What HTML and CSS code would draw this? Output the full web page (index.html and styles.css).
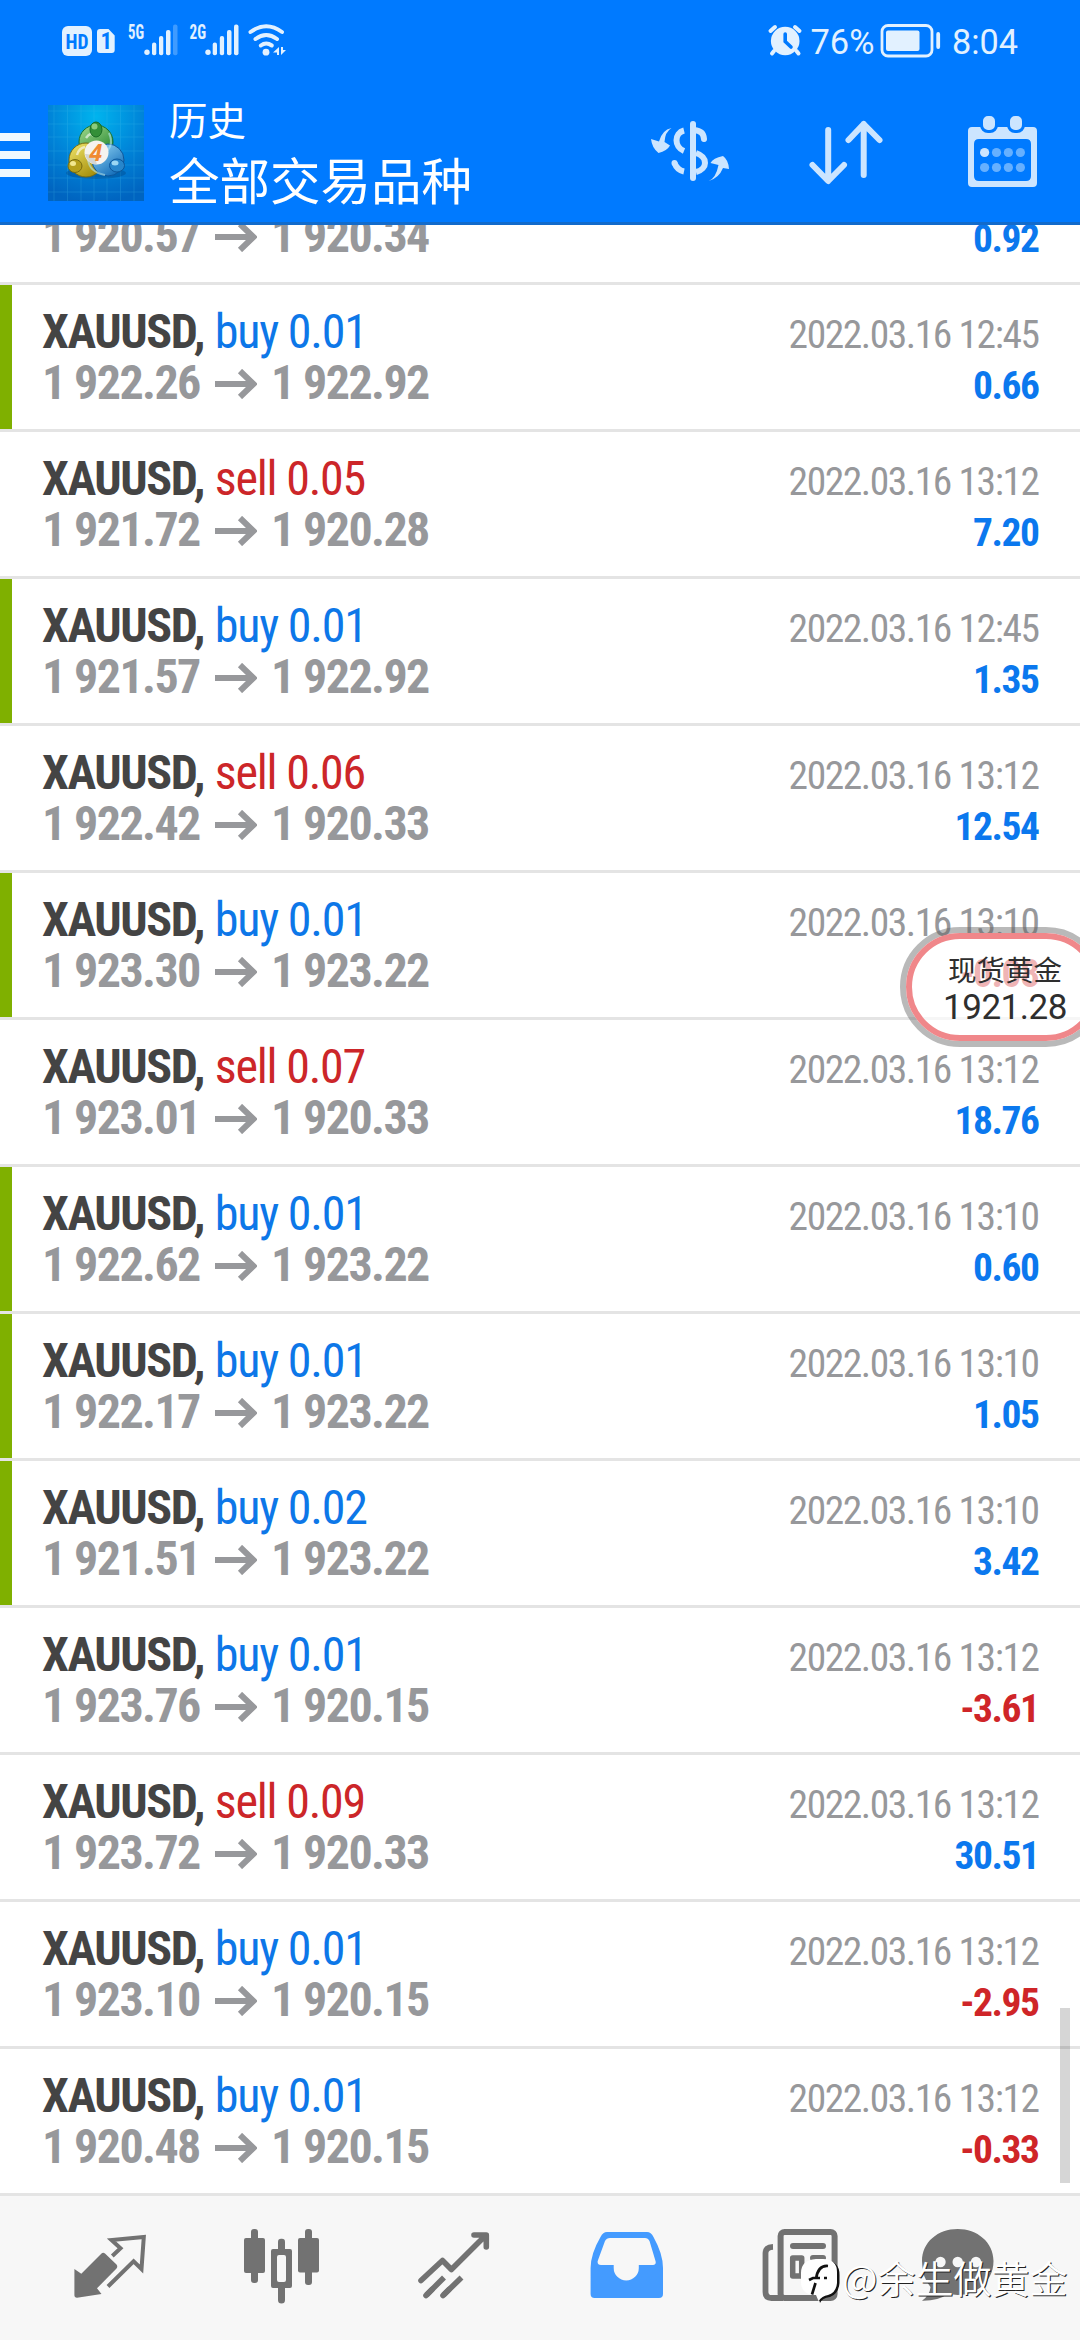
FILE: index.html
```html
<!DOCTYPE html>
<html lang="zh-CN">
<head>
<meta charset="utf-8">
<title>历史</title>
<link rel="stylesheet" href="styles.css">
</head>
<body>
<svg class="defs" width="0" height="0">
  <symbol id="arrow" viewBox="0 0 42 30"><path d="M0 15H38M25 2L38.500 15L25 28" fill="none" stroke="#97989b" stroke-width="6"/></symbol>
</svg>
<div class="screen">
  <header class="header">
    <div class="status">
      <svg class="status-net" width="240" height="80" viewBox="60 0 240 80" fill="#e2f1ff">
        <rect x="62" y="26" width="30" height="30" rx="6"/>
        <text x="65.500" y="48.500" class="hd" textLength="23" lengthAdjust="spacingAndGlyphs">HD</text>
        <path d="M100 29H108.500L114.700 35.500V50A3 3 0 0 1 111.700 53H100A3 3 0 0 1 97 50V32A3 3 0 0 1 100 29Z"/>
        <text x="100.500" y="49" class="sim">1</text>
        <text x="128" y="38.500" class="gen" textLength="16" lengthAdjust="spacingAndGlyphs">5G</text>
        <circle cx="147" cy="52.300" r="2.700"/>
        <rect x="152" y="42.500" width="4.300" height="12.800" rx="2"/>
        <rect x="159" y="36" width="4.300" height="19.300" rx="2"/>
        <rect x="166" y="30" width="4.500" height="25.300" rx="2"/>
        <rect x="173" y="24.500" width="4.500" height="30.800" rx="2" opacity=".28"/>
        <text x="189.500" y="38.500" class="gen" textLength="16.500" lengthAdjust="spacingAndGlyphs">2G</text>
        <circle cx="208" cy="52.300" r="2.700"/>
        <rect x="212.700" y="42.500" width="4.300" height="12.800" rx="2"/>
        <rect x="219.800" y="36" width="4.300" height="19.300" rx="2"/>
        <rect x="227" y="30" width="4.500" height="25.300" rx="2"/>
        <rect x="234" y="24.500" width="4.500" height="30.800" rx="2"/>
        <g fill="none" stroke="#e2f1ff" stroke-width="4" stroke-linecap="round"><path d="M250.500 32Q266.200 20.500 282 32"/><path d="M255.500 39Q266.200 31 277 39"/><path d="M260.800 45.500Q266.200 41.500 271.800 45.500"/></g>
        <circle cx="266" cy="52.200" r="3.400"/>
        <path d="M273 52.500L279 47V55H277V52.500ZM281 47H283V50H286L281 55Z"/>
      </svg>
      <svg class="status-sys" width="110" height="80" viewBox="765 0 110 80" fill="#e2f1ff">
        <path d="M770.500 31L775 27M799.500 31L795 27M774 51L772 53.500M796.500 51L798.500 53.500" stroke="#e2f1ff" stroke-width="4" stroke-linecap="round"/>
        <circle cx="785.200" cy="41" r="14.300"/>
        <path d="M785.200 34V41.500L791 47" fill="none" stroke="#007aff" stroke-width="3.600" stroke-linecap="round"/>
        <text x="810.500" y="54" class="num" textLength="64" lengthAdjust="spacingAndGlyphs">76%</text>
      </svg>
      <svg width="150" height="80" viewBox="875 0 150 80" fill="#e2f1ff">
        <rect x="882" y="25.500" width="50" height="30.500" rx="6" fill="none" stroke="#e2f1ff" stroke-width="2.800"/>
        <rect x="886" y="30.500" width="33.500" height="20.500" rx="2"/>
        <rect x="936.300" y="32" width="3.800" height="17" rx="1.900"/>
        <text x="952" y="54" class="num" textLength="66" lengthAdjust="spacingAndGlyphs">8:04</text>
      </svg>
    </div>
    <div class="bar">
      <svg class="menu" width="30" height="44" viewBox="0 0 30 44" fill="#f0f8ff"><path d="M0 0H30V8H0ZM0 18H30V26H0ZM0 36H30V44H0Z"/></svg>
      <svg class="logo" width="96" height="96" viewBox="0 0 96 96">
        <defs>
          <radialGradient id="sky" cx=".5" cy=".12" r=".9"><stop offset="0" stop-color="#00b4ee"/><stop offset=".55" stop-color="#0083d8"/><stop offset="1" stop-color="#0064c0"/></radialGradient>
          <linearGradient id="green" x2=".7" y2="1"><stop offset="0" stop-color="#a6dc92"/><stop offset="1" stop-color="#21852b"/></linearGradient>
          <linearGradient id="gold" x2=".7" y2="1"><stop offset="0" stop-color="#f2e76d"/><stop offset="1" stop-color="#a38c09"/></linearGradient>
          <linearGradient id="blue" x2=".7" y2="1"><stop offset="0" stop-color="#9bddf9"/><stop offset="1" stop-color="#116bb8"/></linearGradient>
        </defs>
        <rect width="96" height="96" fill="url(#sky)"/>
        <path d="M6 0V96M19.500 0V96M33 0V96M46 0V96M59 0V96M72.500 0V96M86 0V96M0 6H96M0 19H96M0 32H96M0 46H96M0 60H96M0 73H96M0 87H96" stroke="#4cc3ee" stroke-width=".7" opacity=".3"/>
        <ellipse cx="48" cy="68" rx="30" ry="6" fill="#003f7c" opacity=".35"/>
        <circle cx="48" cy="37" r="17" fill="url(#green)" stroke="#17702c"/>
        <circle cx="38" cy="55" r="17" fill="url(#gold)" stroke="#756b14"/>
        <circle cx="60" cy="55" r="16" fill="url(#blue)" stroke="#0d579b"/>
        <path d="M38 33Q43 26 46 31M29 50Q31 43 37 42" fill="none" stroke="#fff" stroke-width="2.500" opacity=".6"/>
        <path d="M61 28Q67 42 55 49M40 54Q41 67 57 70" fill="none" stroke="#b4e6ef" stroke-width="2" opacity=".6"/>
        <ellipse cx="48" cy="24.500" rx="6" ry="7.500" fill="#338f38" stroke="#176b25"/>
        <ellipse cx="46.500" cy="21.500" rx="3" ry="3" fill="#8ccb7c"/>
        <ellipse cx="27" cy="61" rx="7" ry="6.500" fill="#b5a01c" stroke="#796c10"/>
        <ellipse cx="25" cy="58.500" rx="3" ry="2.500" fill="#f2e890"/>
        <ellipse cx="69" cy="60.500" rx="7.500" ry="6.500" fill="#2786cb" stroke="#0d579b"/>
        <ellipse cx="67" cy="58" rx="3.500" ry="2.500" fill="#9bd7f3"/>
        <circle cx="48.500" cy="47.500" r="12" fill="#f5f3ef"/>
        <path d="M37 49Q47 48 49 59.500A12 12 0 0 1 37 49" fill="#c7c8c8" opacity=".7"/>
        <text x="41.500" y="55.500" class="four">4</text>
      </svg>
      <div class="titles">
        <div class="title">历史</div>
        <div class="subtitle">全部交易品种</div>
      </div>
      <div class="actions">
        <svg width="82" height="70" viewBox="648 118 82 70" fill="#cce5ff">
          <path d="M671.500 128Q665 132 664.500 142L670 145.500Q667 151 658.500 153Q652 148 651 139L659 141.500Q662 130 671.500 128Z"/>
          <path d="M708.700 181Q716 178 718.500 165L710.500 163Q713 158 723 156Q728.500 160 729 169L723 168Q719 178 708.700 181Z"/>
          <rect x="690" y="121" width="6" height="60" rx="3"/>
          <g fill="none" stroke="#cce5ff" stroke-width="6"><path d="M684 130.500C674 133 674 147 684 151"/><path d="M694 130C701 131 703.500 133 704 139" stroke-linecap="round"/><path d="M696 153C708 157 708 169 696 172"/><path d="M674.500 163Q677 170 684 171.500"/><path d="M674.500 163V163.100" stroke-linecap="round"/></g>
        </svg>
        <svg width="78" height="70" viewBox="806 118 78 70" fill="none" stroke="#cce5ff" stroke-width="6" stroke-linecap="round" stroke-linejoin="round"><path d="M828.200 130V180M812.500 165L828.200 181L844 165M863.700 175V124M848.500 140L863.700 124L879.500 140"/></svg>
        <svg width="72" height="76" viewBox="966 114 72 76">
          <path fill="#cce5ff" fill-rule="evenodd" d="M972 127H1033Q1037 127 1037 131V183Q1037 187 1033 187H972Q968 187 968 183V131Q968 127 972 127ZM979 139Q974 139 974 144V176Q974 181 979 181H1026Q1031 181 1031 176V144Q1031 139 1026 139Z"/>
          <g fill="#cce5ff" stroke="#007aff" stroke-width="3"><rect x="981.500" y="114.500" width="15" height="17" rx="6.500"/><rect x="1008.500" y="114.500" width="15" height="17" rx="6.500"/></g>
          <g fill="#66b0ff"><circle cx="984.600" cy="152.500" r="4.600" fill="#cce5ff"/><circle cx="996.500" cy="152.500" r="4.600"/><circle cx="1008.400" cy="152.500" r="4.600"/><circle cx="1020.400" cy="152.500" r="4.600"/><circle cx="984.600" cy="167.500" r="4.600"/><circle cx="996.500" cy="167.500" r="4.600"/><circle cx="1008.400" cy="167.500" r="4.600"/><circle cx="1020.400" cy="167.500" r="4.600"/></g>
        </svg>
      </div>
    </div>
  </header>

  <main class="list">
    <div class="row clipped"><div class="deal"><div class="name">XAUUSD, <span class="buy">buy 0.01</span></div><div class="prices"><span>1 920.57</span><svg class="to"><use href="#arrow"/></svg><span>1 920.34</span></div></div><div class="result"><div class="time">2022.03.16 12:45</div><div class="profit">0.92</div></div></div>
    <div class="row marked"><div class="deal"><div class="name">XAUUSD, <span class="buy">buy 0.01</span></div><div class="prices"><span>1 922.26</span><svg class="to"><use href="#arrow"/></svg><span>1 922.92</span></div></div><div class="result"><div class="time">2022.03.16 12:45</div><div class="profit">0.66</div></div></div>
    <div class="row"><div class="deal"><div class="name">XAUUSD, <span class="sell">sell 0.05</span></div><div class="prices"><span>1 921.72</span><svg class="to"><use href="#arrow"/></svg><span>1 920.28</span></div></div><div class="result"><div class="time">2022.03.16 13:12</div><div class="profit">7.20</div></div></div>
    <div class="row marked"><div class="deal"><div class="name">XAUUSD, <span class="buy">buy 0.01</span></div><div class="prices"><span>1 921.57</span><svg class="to"><use href="#arrow"/></svg><span>1 922.92</span></div></div><div class="result"><div class="time">2022.03.16 12:45</div><div class="profit">1.35</div></div></div>
    <div class="row"><div class="deal"><div class="name">XAUUSD, <span class="sell">sell 0.06</span></div><div class="prices"><span>1 922.42</span><svg class="to"><use href="#arrow"/></svg><span>1 920.33</span></div></div><div class="result"><div class="time">2022.03.16 13:12</div><div class="profit">12.54</div></div></div>
    <div class="row marked"><div class="deal"><div class="name">XAUUSD, <span class="buy">buy 0.01</span></div><div class="prices"><span>1 923.30</span><svg class="to"><use href="#arrow"/></svg><span>1 923.22</span></div></div><div class="result"><div class="time">2022.03.16 13:10</div><div class="profit loss">-0.08</div></div></div>
    <div class="row"><div class="deal"><div class="name">XAUUSD, <span class="sell">sell 0.07</span></div><div class="prices"><span>1 923.01</span><svg class="to"><use href="#arrow"/></svg><span>1 920.33</span></div></div><div class="result"><div class="time">2022.03.16 13:12</div><div class="profit">18.76</div></div></div>
    <div class="row marked"><div class="deal"><div class="name">XAUUSD, <span class="buy">buy 0.01</span></div><div class="prices"><span>1 922.62</span><svg class="to"><use href="#arrow"/></svg><span>1 923.22</span></div></div><div class="result"><div class="time">2022.03.16 13:10</div><div class="profit">0.60</div></div></div>
    <div class="row marked"><div class="deal"><div class="name">XAUUSD, <span class="buy">buy 0.01</span></div><div class="prices"><span>1 922.17</span><svg class="to"><use href="#arrow"/></svg><span>1 923.22</span></div></div><div class="result"><div class="time">2022.03.16 13:10</div><div class="profit">1.05</div></div></div>
    <div class="row marked"><div class="deal"><div class="name">XAUUSD, <span class="buy">buy 0.02</span></div><div class="prices"><span>1 921.51</span><svg class="to"><use href="#arrow"/></svg><span>1 923.22</span></div></div><div class="result"><div class="time">2022.03.16 13:10</div><div class="profit">3.42</div></div></div>
    <div class="row"><div class="deal"><div class="name">XAUUSD, <span class="buy">buy 0.01</span></div><div class="prices"><span>1 923.76</span><svg class="to"><use href="#arrow"/></svg><span>1 920.15</span></div></div><div class="result"><div class="time">2022.03.16 13:12</div><div class="profit loss">-3.61</div></div></div>
    <div class="row"><div class="deal"><div class="name">XAUUSD, <span class="sell">sell 0.09</span></div><div class="prices"><span>1 923.72</span><svg class="to"><use href="#arrow"/></svg><span>1 920.33</span></div></div><div class="result"><div class="time">2022.03.16 13:12</div><div class="profit">30.51</div></div></div>
    <div class="row"><div class="deal"><div class="name">XAUUSD, <span class="buy">buy 0.01</span></div><div class="prices"><span>1 923.10</span><svg class="to"><use href="#arrow"/></svg><span>1 920.15</span></div></div><div class="result"><div class="time">2022.03.16 13:12</div><div class="profit loss">-2.95</div></div></div>
    <div class="row"><div class="deal"><div class="name">XAUUSD, <span class="buy">buy 0.01</span></div><div class="prices"><span>1 920.48</span><svg class="to"><use href="#arrow"/></svg><span>1 920.15</span></div></div><div class="result"><div class="time">2022.03.16 13:12</div><div class="profit loss">-0.33</div></div></div>
    <div class="scrollbar"></div>
  </main>

  <nav class="tabs">
    <svg width="80" height="84" viewBox="70 2224 80 84" fill="#727272"><path d="M74.400 2269L81.300 2273.700L101.500 2253.500Q103.200 2252 105 2253.500L116.500 2264.500Q118 2266.500 116.500 2268.500L97 2288.300L101.500 2294L77 2297.700Q74.400 2297.700 74.400 2295Z"/><path d="M112.300 2256L120.500 2248.300L111.500 2240L143.800 2237L141.500 2269L133.600 2261.300L108 2286.500" fill="none" stroke="#727272" stroke-width="4"/></svg>
    <svg width="80" height="84" viewBox="241 2224 80 84" fill="#727272"><rect x="244" y="2238" width="21" height="35" rx="2"/><rect x="251" y="2229" width="7" height="54" rx="3"/><rect x="298" y="2238" width="21" height="34.500" rx="2"/><rect x="305" y="2229" width="7" height="56" rx="3"/><path fill-rule="evenodd" d="M273 2249H290Q292 2249 292 2251V2286Q292 2288 290 2288H285V2300A3.500 3.500 0 0 1 278 2300V2288H273Q271 2288 271 2286V2251Q271 2249 273 2249ZM279 2255Q277 2255 277 2257V2280Q277 2282 279 2282H284Q286 2282 286 2280V2257Q286 2255 284 2255Z"/><rect x="278" y="2238.700" width="7" height="13" rx="3"/></svg>
    <svg width="80" height="84" viewBox="415 2224 80 84" fill="none" stroke="#727272" stroke-width="5.600" stroke-linejoin="round"><path stroke-linecap="round" d="M421 2280.500L442.500 2260.500L451.400 2269.500L485.500 2235.500M474 2235H486.300V2247"/><path d="M426.500 2295L444 2277.500M443.500 2295L461.500 2277.500"/><path stroke-linecap="round" d="M426 2295.500L432 2289.500M443 2295.500L449 2289.500"/></svg>
    <svg width="80" height="84" viewBox="587 2224 80 84"><path fill="#449bff" fill-rule="evenodd" d="M607 2232H647Q651 2232 653.500 2237Q663 2254 663 2268V2294Q663 2298 659 2298H594.600Q590.600 2298 590.600 2294V2268Q590.600 2254 600.500 2237Q603 2232 607 2232ZM610 2238Q606.500 2238 605 2241L597.700 2261Q597 2265 601 2265H613.700V2268A12.500 12.500 0 0 0 638.800 2268V2265H653Q656.500 2265 655.500 2261L649.500 2241Q648 2238 645 2238Z"/></svg>
    <svg width="80" height="84" viewBox="760 2224 80 84" fill="#727272"><rect x="780.600" y="2232" width="54" height="66" rx="4" fill="none" stroke="#727272" stroke-width="6"/><path d="M773 2246.800Q765.500 2247 765.500 2253V2292Q765.500 2298 771.500 2298H783" fill="none" stroke="#727272" stroke-width="5.800"/><rect x="790" y="2243" width="36" height="6" rx="3"/><rect x="810" y="2255" width="16" height="6" rx="3"/><rect x="792.700" y="2258" width="9" height="18" fill="none" stroke="#727272" stroke-width="5.500" stroke-linejoin="round"/></svg>
    <svg width="80" height="84" viewBox="919 2224 80 84"><path fill="#727272" d="M957.700 2229C977 2229 993.500 2242 993.500 2261C993.500 2281 977 2295 957.700 2295L948 2294Q938 2301 922 2300.700Q930 2295 930.500 2287Q922 2277 922 2261C922 2242 938 2229 957.700 2229Z"/><g fill="#f7f7f7"><circle cx="940.500" cy="2262" r="5.200"/><circle cx="957.700" cy="2262" r="5.200"/><circle cx="976" cy="2262" r="5.200"/></g></svg>
  </nav>

  <div class="quote"><div class="quote-name">现货黄金</div><div class="quote-price">1921.28</div></div>

  <div class="watermark">
    <svg width="42" height="48" viewBox="799 2258 42 48"><path d="M815 2261.500H825Q839.500 2261.500 839.500 2276V2284Q838.500 2295 830 2298Q822 2299 820 2304L818 2296H825Z" fill="#111"/><path d="M816 2260H823Q837 2260.500 837 2273V2284Q836 2294 828 2296Q822 2297 818.500 2302L816 2296Q801 2296 801 2283V2274Q801 2261 816 2260Z" fill="#fff"/><path d="M828 2267Q818 2266 816 2280M809 2281L813 2279H820M824 2279H827M815.500 2284L812 2295.500" fill="none" stroke="#111" stroke-width="2.700"/></svg>
    <span>@余生做黄金</span>
  </div>
</div>
</body>
</html>
```
FILE: styles.css
```css
* { box-sizing: border-box; }
body { margin: 0; background: #fff; font-family: "Roboto Condensed", Roboto, "Noto Sans CJK SC", sans-serif; }
svg { display: block; flex: none; }
.defs { position: absolute; }
.screen { position: relative; width: 1080px; height: 2340px; overflow: hidden; display: flex; flex-direction: column; }

.header { height: 225px; flex: none; background: #007aff; border-bottom: 3px solid #126bcb; position: relative; z-index: 1; }
.status { height: 80px; display: flex; padding: 0 55px 0 60px; }
.status-sys { margin-left: auto; }
.hd { font: 700 21px "Roboto Condensed", sans-serif; fill: #007aff; }
.sim { font: 700 23px "Roboto Condensed", sans-serif; fill: #007aff; }
.gen { font: 700 20px "Roboto Condensed", sans-serif; }
.num { font: 400 35.500px Roboto, sans-serif; }
.four { font: italic 700 23px "Noto Sans", sans-serif; fill: #f08a32; }

.bar { display: flex; height: 142px; align-items: flex-start; }
.menu { margin-top: 53px; }
.logo { margin: 25px 0 0 18px; }
.titles { margin: 11px 0 0 25px; color: #fff; font-family: "Noto Sans CJK SC", sans-serif; white-space: nowrap; }
.title { font-size: 38.500px; line-height: 54px; }
.subtitle { font-size: 50.500px; line-height: 66px; }
.actions { margin: 34px 42px 0 auto; display: grid; grid-template-columns: 158px 160px 72px; align-items: start; }
.actions svg:nth-child(-n+2) { margin-top: 4px; }

.list { height: 1971px; flex: none; position: relative; }
.row { height: 147px; display: flex; justify-content: space-between; padding: 21px 41.500px 0 42px; border-bottom: 3px solid #e4e4e4; position: relative; }
.clipped { margin-top: -87px; }
.marked { background: linear-gradient(#7fb000, #7fb000) 0 0 / 12px 144px no-repeat; }
.name, .prices { font-size: 48px; line-height: 51px; font-weight: 700; color: #444; white-space: nowrap; letter-spacing: -1.400px; }
.name span { font-weight: 400; letter-spacing: -1.200px; margin-left: 1px; }
.prices { color: #97989b; display: flex; align-items: center; letter-spacing: -1.600px; }
.prices span { width: 173px; }
.prices .to { width: 42px; height: 30px; margin: 2px 14px 0 0; }
.buy { color: #0d77e8; }
.sell { color: #cc2629; }
.result { text-align: right; font-size: 39.500px; line-height: 51px; padding-top: 3px; white-space: nowrap; }
.time { color: #97989b; letter-spacing: -1.450px; }
.profit { color: #0b78ee; font-weight: 700; letter-spacing: -1.450px; }
.loss { color: #cf2528; }
.scrollbar { position: absolute; left: 1060px; top: 1783px; width: 10px; height: 175px; background: rgba(0,0,0,.16); }

.tabs { height: 144px; flex: none; background: #f7f7f7; display: grid; grid-template-columns: 171px 174px 172px 173px 159px 80px; padding: 28px 0 0 70px; }

.quote { position: absolute; left: 900px; top: 927px; width: 206px; height: 120px; border: 6px solid rgba(100,100,100,.45); border-radius: 60px; z-index: 2; text-align: center; color: #2e2e2e; }
.quote::before { content: ""; position: absolute; inset: 0; border: 6px solid #f0878a; border-radius: 54px; background: rgba(255,255,255,.66); z-index: -1; }
.quote-name { margin: 19px 0 0 4px; font: 400 28.500px/34px "Noto Sans CJK SC", sans-serif; }
.quote-price { margin: 1px 0 0 4px; font: 400 35px/42px Roboto, sans-serif; letter-spacing: -.5px; }

.watermark { position: absolute; left: 799px; top: 2249px; display: flex; align-items: center; gap: 1px; z-index: 3; color: #fff; font: 400 38px/56px "Noto Sans CJK SC", sans-serif; font-weight: 350; text-shadow: 1px 1px .5px #222; white-space: nowrap; }
.watermark svg { margin-top: 8px; }
```
